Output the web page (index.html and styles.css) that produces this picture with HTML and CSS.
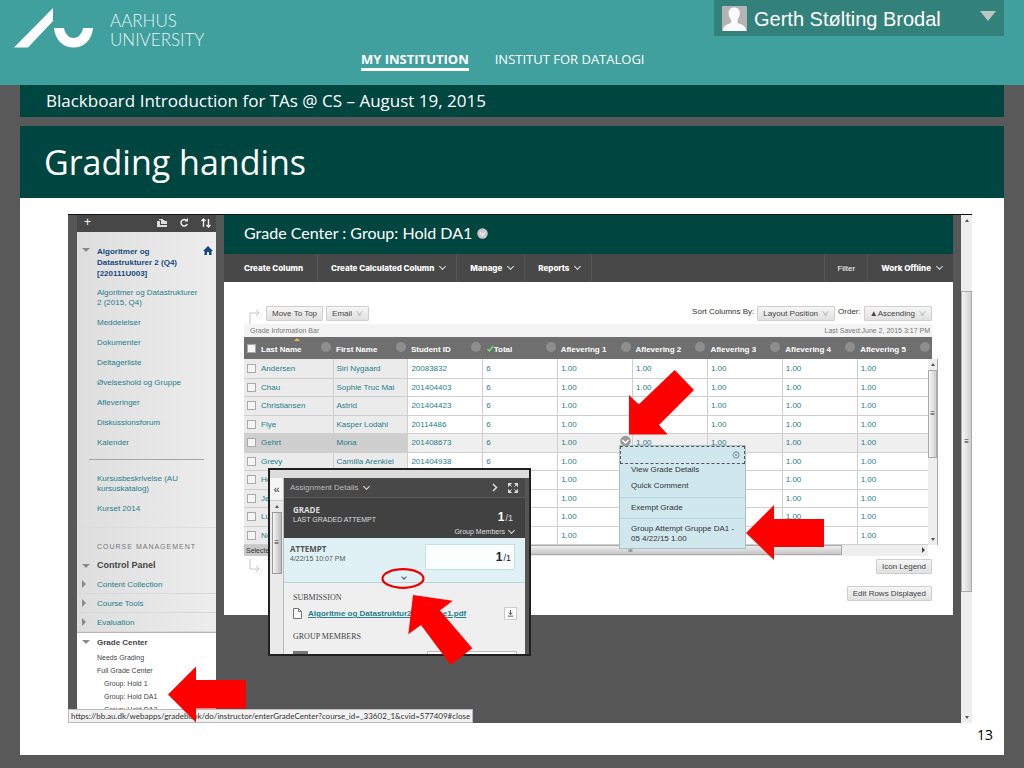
FILE: index.html
```
<!DOCTYPE html>
<html lang="en">
<head>
<meta charset="utf-8">
<title>Grading handins</title>
<link rel="stylesheet" href="styles.css">
</head>
<body>
<header class="top">
  <div class="brand">
    <svg class="logo" viewBox="0 0 80 40" aria-hidden="true"><path d="M0 39.500 39 0V13L14 39.500ZM40 20H50C51 26 55 30 59.500 30S68 26 69 20H79C78 32 70 39.500 59.500 39.500S41 32 40 20Z" fill="#fff"/></svg>
    <span class="brand-name">AARHUS<br>UNIVERSITY</span>
  </div>
  <nav class="tabs">
    <a class="tab tab-on" href="#">MY INSTITUTION</a>
    <a class="tab" href="#">INSTITUT FOR DATALOGI</a>
  </nav>
  <button class="user" type="button">
    <svg class="avatar" viewBox="0 0 25 25" aria-hidden="true"><rect width="25" height="25" rx="1" fill="#b4b4b4"/><path d="M12.200 1.500C16 1.500 18.200 4 17.800 8Q17.500 11.500 15.500 14V17Q24 19 24.500 25H.5Q1 19 9 17V14Q7 11.500 6.600 8C6.200 4 8.400 1.500 12.200 1.500Z" fill="#fafafa"/></svg>
    <span class="user-name">Gerth Stølting Brodal</span>
    <svg class="caret" viewBox="0 0 16 10" aria-hidden="true"><path d="M0 0H16L8 10Z" fill="#bcc6c5"/></svg>
  </button>
</header>
<div class="page">
  <div class="course">Blackboard Introduction for TAs @ CS – August 19, 2015</div>
  <h1 class="heading">Grading handins</h1>
  <main class="slide">
    <div class="shot">
      <aside class="side">
        <div class="side-tools">
          <span class="plus">+</span>
          <svg class="tool" viewBox="0 0 14 14"><path d="M2 5H5V9H12V11H2ZM6 4H9L10 5H12V8H6ZM4 3H8V4H4Z" fill="#ddd"/></svg>
          <svg class="tool" viewBox="0 0 14 14"><path d="M9.500 4.500A3.200 3.200 0 1 0 10.200 8" fill="none" stroke="#eee" stroke-width="1.500"/><path d="M7.500 5.500H11V2Z" fill="#eee"/></svg>
          <svg class="tool" viewBox="0 0 14 14"><path d="M4.500 11V3M2.500 5 4.500 3 6.500 5M9.500 3V11M7.500 9 9.500 11 11.500 9" fill="none" stroke="#eee" stroke-width="1.400"/></svg>
        </div>
        <div class="side-main">
          <div class="side-title"><i class="tri-down"></i><a class="title-link" href="#">Algoritmer og<br>Datastrukturer 2 (Q4)<br>[220111U003]</a>
            <svg class="home" viewBox="0 0 10 9"><path d="M0 5 5 0 10 5H8.500V9H6V6H4V9H1.500V5Z" fill="#14457c"/></svg></div>
          <nav class="links">
            <a href="#">Algoritmer og Datastrukturer<br>2 (2015, Q4)</a>
            <a href="#">Meddelelser</a>
            <a href="#">Dokumenter</a>
            <a href="#">Deltagerliste</a>
            <a href="#">Øvelseshold og Gruppe</a>
            <a href="#">Afleveringer</a>
            <a href="#">Diskussionsforum</a>
            <a href="#">Kalender</a>
          </nav>
          <hr class="rule">
          <nav class="links">
            <a href="#">Kursusbeskrivelse (AU<br>kursuskatalog)</a>
            <a href="#">Kurset 2014</a>
          </nav>
          <div class="mgmt">COURSE MANAGEMENT</div>
          <div class="fold strong"><i class="tri-down"></i>Control Panel</div>
          <a class="fold" href="#"><i class="tri-right"></i>Content Collection</a>
          <a class="fold" href="#"><i class="tri-right"></i>Course Tools</a>
          <a class="fold" href="#"><i class="tri-right"></i>Evaluation</a>
        </div>
        <div class="side-grade">
          <div class="fold dark"><i class="tri-down"></i>Grade Center</div>
          <a class="sub" href="#">Needs Grading</a>
          <a class="sub" href="#">Full Grade Center</a>
          <a class="sub deep" href="#">Group: Hold 1</a>
          <a class="sub deep" href="#">Group: Hold DA1</a>
          <a class="sub deep" href="#">Group: Hold DA2</a>
        </div>
      </aside>

      <section class="center">
        <h2 class="gc-title">Grade Center : Group: Hold DA1 <svg class="badge" viewBox="0 0 11 11"><circle cx="5.500" cy="5.500" r="5.200" fill="#c9c9c9"/><path d="M3 4.500 5.500 7 8 4.500" fill="none" stroke="#eee" stroke-width="1.300"/></svg></h2>
        <div class="menu">
          <button class="mi" type="button">Create Column</button>
          <button class="mi" type="button">Create Calculated Column<i class="chev"></i></button>
          <button class="mi" type="button">Manage<i class="chev"></i></button>
          <button class="mi" type="button">Reports<i class="chev"></i></button>
          <span class="grow"></span>
          <button class="mi plain" type="button">Filter</button>
          <button class="mi last" type="button">Work Offline<i class="chev"></i></button>
        </div>
        <div class="work">
          <div class="bar">
            <svg class="elbow" viewBox="0 0 14 17"><path d="M1 17V6H10M7 3 10 6 7 9" fill="none" stroke="#c4c4c4"/></svg>
            <button class="btn" type="button">Move To Top</button>
            <button class="btn" type="button">Email<i class="dbl"></i></button>
            <span class="grow"></span>
            <span class="lab">Sort Columns By:</span>
            <button class="btn" type="button">Layout Position<i class="dbl"></i></button>
            <span class="lab">Order:</span>
            <button class="btn" type="button">▲Ascending<i class="dbl"></i></button>
          </div>
          <div class="info"><span>Grade Information Bar</span><span>Last Saved:June 2, 2015 3:17 PM</span></div>
          <div class="grid">
            <table class="grades">
              <colgroup><col class="c-check"><col class="c-last"><col><col><col><col><col><col><col><col></colgroup>
              <thead><tr>
                <th><input type="checkbox" aria-label="Select all"></th>
                <th class="sorted"><div class="th">Last Name<i class="dot"></i></div></th>
                <th><div class="th">First Name<i class="dot"></i></div></th>
                <th><div class="th">Student ID<i class="dot"></i></div></th>
                <th><div class="th"><span><svg class="tick" viewBox="0 0 7 7"><path d="M1 4 3 6 6.500 1" fill="none" stroke="#7be06a" stroke-width="1.400"/></svg>Total</span><i class="dot"></i></div></th>
                <th><div class="th">Aflevering 1<i class="dot"></i></div></th>
                <th><div class="th">Aflevering 2<i class="dot"></i></div></th>
                <th><div class="th">Aflevering 3<i class="dot"></i></div></th>
                <th><div class="th">Aflevering 4<i class="dot"></i></div></th>
                <th><div class="th">Aflevering 5<i class="dot"></i></div></th>
              </tr></thead>
              <tbody>
                <tr><td><input type="checkbox" aria-label="Andersen"></td><td>Andersen</td><td>Siri Nygaard</td><td>20083832</td><td>6</td><td>1.00</td><td>1.00</td><td>1.00</td><td>1.00</td><td>1.00</td></tr>
                <tr><td><input type="checkbox" aria-label="Chau"></td><td>Chau</td><td>Sophie Truc Mai</td><td>201404403</td><td>6</td><td>1.00</td><td>1.00</td><td>1.00</td><td>1.00</td><td>1.00</td></tr>
                <tr><td><input type="checkbox" aria-label="Christiansen"></td><td>Christiansen</td><td>Astrid</td><td>201404423</td><td>6</td><td>1.00</td><td>1.00</td><td>1.00</td><td>1.00</td><td>1.00</td></tr>
                <tr><td><input type="checkbox" aria-label="Flye"></td><td>Flye</td><td>Kasper Lodahl</td><td>20114486</td><td>6</td><td>1.00</td><td></td><td>1.00</td><td>1.00</td><td>1.00</td></tr>
                <tr class="hover"><td><input type="checkbox" aria-label="Gehrt"></td><td>Gehrt</td><td>Mona</td><td>201408673</td><td>6</td><td>1.00</td><td>1.00</td><td>1.00</td><td>1.00</td><td>1.00</td></tr>
                <tr><td><input type="checkbox" aria-label="Grevy"></td><td>Grevy</td><td>Camilla Arenkiel</td><td>201404938</td><td>6</td><td>1.00</td><td></td><td></td><td>1.00</td><td>1.00</td></tr>
                <tr><td><input type="checkbox" aria-label="He"></td><td>He</td><td></td><td></td><td></td><td>1.00</td><td></td><td></td><td>1.00</td><td>1.00</td></tr>
                <tr><td><input type="checkbox" aria-label="Je"></td><td>Je</td><td></td><td></td><td></td><td>1.00</td><td></td><td></td><td>1.00</td><td>1.00</td></tr>
                <tr><td><input type="checkbox" aria-label="Lu"></td><td>Lu</td><td></td><td></td><td></td><td>1.00</td><td></td><td></td><td>1.00</td><td>1.00</td></tr>
                <tr><td><input type="checkbox" aria-label="No"></td><td>No</td><td></td><td></td><td></td><td>1.00</td><td></td><td></td><td></td><td>1.00</td></tr>
              </tbody>
            </table>
            <div class="vscroll"><i class="up"></i><i class="vthumb">≡</i><i class="down"></i></div>
          </div>
          <div class="hscroll"><span class="sel">Selected</span><span class="hthumb">III</span><i class="right"></i></div>
          <div class="under">
            <svg class="elbow" viewBox="0 0 14 17"><path d="M1 0V10H10M7 7 10 10 7 13" fill="none" stroke="#c4c4c4"/></svg>
            <button class="btn" type="button">Icon Legend</button>
          </div>
          <div class="under2"><button class="btn" type="button">Edit Rows Displayed</button></div>
        </div>
      </section>

      <div class="wscroll"><i class="up"></i><i class="wthumb">≡</i><i class="down"></i></div>

      <div class="context">
        <div class="ctx-head"><svg class="close" viewBox="0 0 8 8"><circle cx="4" cy="4" r="3" fill="none" stroke="#8fa3aa" stroke-width="1.300"/><path d="M2.800 2.800 5.200 5.200M5.200 2.800 2.800 5.200" stroke="#8fa3aa"/></svg></div>
        <a href="#">View Grade Details</a>
        <a href="#">Quick Comment</a>
        <a class="split" href="#">Exempt Grade</a>
        <a class="split" href="#">Group Attempt Gruppe DA1 -<br>05 4/22/15 1.00</a>
      </div>

      <section class="attempt">
        <div class="rail"><span class="coll">«</span><i class="up"></i><i class="rthumb">≡</i></div>
        <div class="att-body">
          <div class="att-top"><span>Assignment Details</span><i class="chev"></i><span class="grow"></span>
            <svg class="next" viewBox="0 0 6 9"><path d="M1 1 4.500 4.500 1 8" fill="none" stroke="#ddd" stroke-width="1.500"/></svg>
            <svg class="expand" viewBox="0 0 11 11"><path d="M0 0H4L0 4ZM11 0V4L7 0ZM0 11V7L4 11ZM11 11H7L11 7ZM1 1 4 4M10 1 7 4M1 10 4 7M10 10 7 7" fill="#ddd" stroke="#ddd"/></svg></div>
          <div class="att-grade">
            <div><div class="big">GRADE</div><div>LAST GRADED ATTEMPT</div></div>
            <div class="score-col"><div class="score"><b>1</b>/1</div><div class="members">Group Members<i class="chev"></i></div></div>
          </div>
          <div class="att-try">
            <div><div class="big">ATTEMPT</div><div>4/22/15 10:07 PM</div></div>
            <div class="score box"><b>1</b>/1</div>
            <i class="chev opener"></i>
          </div>
          <div class="att-sub">
            <div class="serif">SUBMISSION</div>
            <div class="file">
              <svg class="doc" viewBox="0 0 9 11"><path d="M.5 .5H5.500L8.500 3.500V10.500H.5ZM5.500 .5V3.500H8.500" fill="#fff" stroke="#777"/></svg>
              <a href="#">Algoritme og Datastruktur2 - Gruppe1.pdf</a>
              <button class="dl" type="button" aria-label="Download"><svg viewBox="0 0 8 8"><path d="M4 0V5M2 3 4 5.200 6 3M1 7H7" fill="none" stroke="#444"/></svg></button>
            </div>
            <div class="serif">GROUP MEMBERS</div>
            <div class="cut"><i></i><i></i></div>
          </div>
        </div>
      </section>

      <div class="status">https://bb.au.dk/webapps/gradebook/do/instructor/enterGradeCenter?course_id=_33602_1&amp;cvid=577409#close</div>

      <svg class="marks" viewBox="68 214 904 509" aria-hidden="true">
        <circle cx="625.500" cy="441" r="5.300" fill="#9a9a9a"/><path d="M622.500 440 625.500 443 628.500 440" fill="none" stroke="#fff" stroke-width="1.400"/>
        <g fill="#f00">
          <path d="M674.700 370 694 390 659 425 667.700 434.600H629V395L638.700 404.600Z"/>
          <path d="M746 533 774 505V519H824V547H774V560Z"/>
          <path d="M413 595 452.700 600.700 440 610.500 472.300 648.300 450.700 665 421 625 408.300 634.300Z"/>
          <path d="M168 694.500 196 666.500V680H246V708.500H196V722.500Z"/>
        </g>
        <ellipse cx="403" cy="578.500" rx="20.500" ry="9.300" fill="none" stroke="#e00" stroke-width="2.200"/>
      </svg>
    </div>
    <footer class="num">13</footer>
  </main>
</div>
</body>
</html>
```
FILE: styles.css
```
* { box-sizing: border-box; }
body { margin: 0; background: #595959; font-family: "Liberation Sans", Arial, sans-serif; font-size: 8px; line-height: 11px; color: #333; }
a { text-decoration: none; color: #24808c; }
button { font: inherit; border: 0; margin: 0; cursor: pointer; }
i { font-style: normal; }
svg { display: block; flex: none; }
.grow { flex: 1; }

.top { display: flex; align-items: flex-start; min-height: 85px; padding-right: 20px; background: #3fa09e; }
.brand { display: flex; width: 361px; padding: 8px 0 0 14px; color: #e6f3f3; }
.logo { width: 80px; height: 40px; }
.brand-name { padding: 3px 0 0 16px; font: 300 17px/19px Lato, sans-serif; }
.tabs { display: flex; gap: 26px; padding-top: 50px; font: 13px/18px "Open Sans", sans-serif; }
.tab { color: #fff; white-space: nowrap; }
.tab-on { font-weight: 700; border-bottom: 3px solid #fff; }
.user { display: flex; width: 290px; height: 36px; margin-left: auto; padding: 6px 8px 0 8px; background: #33817b; color: #fff; font-size: 20px; line-height: 26px; }
.avatar { width: 25px; height: 25px; }
.user-name { margin-left: 7px; white-space: nowrap; }
.caret { width: 16px; height: 10px; margin: 5px 0 0 auto; }

.page { margin: 0 20px 13px; }
.course { padding: 4px 26px 4px; background: #004640; color: #fff; font: 17px/24px "Open Sans", sans-serif; }
.heading { margin: 9px 0 0; padding: 12px 24px 12px; background: #004640; color: #fff; font: 400 34px/48px "Open Sans", sans-serif; }
.slide { padding: 16px 0 0; background: #fff; }
.shot { position: relative; display: grid; grid-template-columns: 139px 1fr 11px; column-gap: 8px; min-height: calc(100vh - 259px); margin: 0 32px 0 48px; padding-left: 9px; border-top: 1px solid #111; background: #575757; overflow: hidden; }
.num { padding: 0 11px 8px 0; text-align: right; color: #000; font: 14px/24px "Open Sans", sans-serif; }

.side { display: flex; flex-direction: column; }
.side-tools { display: flex; align-items: center; height: 17px; padding: 0 3px 2px 7px; gap: 8px; background: #474747; color: #fff; }
.plus { flex: 1; font-size: 12px; }
.tool { width: 14px; height: 14px; }
.side-main { padding-top: 14px; background: linear-gradient(90deg, #dedede, #ededed); }
.side-title { display: flex; padding: 0 3px 9px 5px; line-height: 11px; }
.title-link { flex: 1; color: #174a80; font-weight: 700; }
.home { width: 10px; height: 9px; }
.tri-down { flex: none; width: 8px; height: 0; margin: 2px 7px 0 0; border: solid transparent; border-width: 4px 4px 0; border-top-color: #8a8a8a; }
.tri-right { flex: none; width: 4px; height: 0; margin: 0 11px 0 0; border: solid transparent; border-width: 4px 0 4px 4px; border-left-color: #8a8a8a; }
.links { display: flex; flex-direction: column; gap: 9px; padding-left: 20px; }
.links a:first-child { line-height: 10px; }
.rule { margin: 11px 12px 14px; border: 0; border-top: 1px solid #a5a5a5; }
.mgmt { margin-top: 13px; padding: 13px 0 4px 20px; border-top: 1px solid #ddd; color: #777; font-size: 7px; letter-spacing: 1px; white-space: nowrap; }
.fold { display: flex; align-items: center; height: 19px; padding-left: 5px; border-bottom: 1px solid #d9d9d9; }
.fold .tri-down { margin-top: 0; }
.strong, .dark { font-weight: 700; border: 0; color: #444; }
.strong { font-size: 9px; }
.dark { height: 18px; }
.side-grade { flex: 1; background: #fff; border-top: 1px solid #b5b5b5; }
.sub { display: block; padding-left: 20px; font-size: 7px; line-height: 13px; color: #444; }
.deep { padding-left: 27px; }

.center { min-width: 0; }
.gc-title { display: flex; align-items: center; gap: 5px; margin: 0; height: 39px; padding: 0 0 3px 20px; background: #004640; color: #fff; font: 400 16px/36px Lato, sans-serif; }
.badge { width: 11px; height: 11px; }
.menu { display: flex; height: 28px; background: #484848; }
.mi { display: flex; align-items: center; padding: 0 10px 0 13px; border-right: 1px solid #555; background: none; color: #fff; font: 800 8px/11px Inter, sans-serif; white-space: nowrap; }
.mi:first-child { padding: 0 14px 0 20px; }
.plain { padding: 0 12px; border-left: 1px solid #555; font: 8px/11px "Liberation Sans", sans-serif; }
.last { border: 0; }
.chev { flex: none; width: 5px; height: 5px; margin: 0 1px 3px 6px; border: solid #ddd; border-width: 0 1px 1px 0; transform: rotate(45deg); }
.work { padding: 24px 21px 14px 20px; background: #fff; }
.bar { display: flex; gap: 3px; height: 18px; white-space: nowrap; }
.elbow { width: 14px; height: 17px; margin: 1px 0 0 5px; }
.lab { line-height: 12px; }
.btn { display: inline-flex; align-items: center; height: 15px; padding: 0 5px; border: 1px solid #cfcfcf; border-radius: 1px; background: linear-gradient(#f6f6f6, #e0e0e0); color: #444; white-space: nowrap; }
.dbl { width: 5px; height: 5px; margin: -5px 1px 0 5px; border: solid #c4c4c4; border-width: 0 1px 1px 0; box-shadow: 2px 2px 0 -1px #c4c4c4; transform: rotate(45deg); }
.info { display: flex; justify-content: space-between; padding: 1px 2px 1px 6px; background: #f3f3f3; color: #777; font-size: 7px; }
.grid { position: relative; }
.grades { width: 100%; table-layout: fixed; border-collapse: collapse; }
.c-check { width: 14px; }
.c-last { width: 75px; }
.grades th { height: 22px; padding: 0; background: #6f6f6f; color: #fff; text-align: left; }
.sorted { position: relative; }
.sorted::before { content: ""; position: absolute; top: 1px; left: 36px; border: solid transparent; border-width: 0 3px 3px; border-bottom-color: #f0b93c; }
.th { display: flex; justify-content: space-between; padding: 3px 2px 0 3px; white-space: nowrap; }
.tick { display: inline-block; width: 8px; height: 7px; }
.dot { width: 10px; height: 10px; margin-top: -2px; border-radius: 5px; background: #8e8e8e; }
.grades td { height: 19px; padding: 0 3px; border-bottom: 1px solid #cfcfcf; color: #24808c; white-space: nowrap; }
.grades tr:nth-child(even) td { height: 18px; }
.grades td:nth-child(-n+3) { background: #ebebeb; }
.grades td:nth-child(n+3) { border-left: 1px solid #cfcfcf; }
.grades .hover td { background: #efefef; }
.grades .hover td:nth-child(-n+3) { background: #cfcfcf; }
.grades input { appearance: none; display: block; width: 9px; height: 9px; margin: 0 0 0 3px; border: 1px solid #aaa; background: #f5f5f5; }
.grades td:first-child { padding: 0; }
.vscroll { position: absolute; top: 22px; right: -6px; bottom: 0; width: 10px; display: flex; flex-direction: column; align-items: center; background: #eee; border-right: 1px solid #aaa; }
.up, .down { border: solid transparent; border-width: 0 2px 3px; border-bottom-color: #555; margin: 4px 0; }
.down { border-width: 3px 2px 0; border-top-color: #555; margin-top: auto; }
.vthumb { width: 9px; height: 88px; border: 1px solid #aaa; background: linear-gradient(90deg, #f6f6f6, #d0d0d0); line-height: 86px; text-align: center; }
.hscroll { display: flex; align-items: center; height: 11px; margin-right: 4px; background: #eee; }
.sel { padding: 0 2px; background: #c8c8c8; font-size: 7px; }
.hthumb { width: 567px; height: 10px; border: 1px solid #aaa; background: linear-gradient(#eee, #c6c6c6); font-size: 5px; line-height: 8px; padding-left: 352px; }
.right { margin: 0 3px 0 auto; border: solid transparent; border-width: 3px 0 3px 3px; border-left-color: #444; }
.under { display: flex; justify-content: space-between; padding-top: 3px; }
.under .elbow { margin-top: 0; }
.under2 { padding-top: 10px; text-align: right; }
.wscroll { display: flex; flex-direction: column; align-items: center; background: #eee; }
.wthumb { width: 11px; height: 301px; margin-top: 65px; border: 1px solid #aaa; background: linear-gradient(90deg, #f6f6f6, #cfcfcf); line-height: 299px; text-align: center; }

.context { position: absolute; left: 551px; top: 230px; width: 127px; padding-bottom: 4px; border: 1px solid #a8c0c6; background: #d0e8ed; }
.context a { display: block; margin: 0 0 6px; padding: 0 11px; line-height: 10px; color: #333; white-space: nowrap; }
.ctx-head { display: flex; justify-content: flex-end; align-items: center; height: 18px; margin-bottom: 1px; padding-right: 4px; border: 1px dashed #555; }
.close { width: 8px; height: 8px; }
.context .split { padding-top: 5px; border-top: 1px solid #b8d3da; margin-bottom: 5px; }
.context .split:last-child { margin: 0; }

.attempt { position: absolute; left: 200px; top: 253px; display: flex; width: 263px; height: 188px; padding-top: 8px; border: 2px solid #202020; background: #dcdcdc; overflow: hidden; }
.rail { display: flex; flex-direction: column; align-items: center; width: 14px; background: #eaeaea; border-right: 1px solid #bbb; }
.coll { width: 100%; height: 23px; border-bottom: 1px solid #ccc; background: #f5f5f5; text-align: center; font-size: 11px; line-height: 22px; }
.rthumb { width: 10px; height: 62px; border: 1px solid #999; background: linear-gradient(90deg, #f6f6f6, #bbb); line-height: 60px; text-align: center; }
.att-body { flex: 1; border-right: 4px solid #555; background: #efefef; color: #555; font-size: 7px; line-height: 9px; }
.att-top { display: flex; align-items: center; height: 20px; padding: 0 7px 0 6px; background: #484848; border-bottom: 1px solid #5a5a5a; color: #bbb; font-size: 8px; }
.next { width: 6px; height: 9px; margin-right: 10px; }
.expand { width: 10px; height: 10px; }
.att-grade { display: flex; justify-content: space-between; height: 40px; padding: 7px 12px 0 9px; background: #414141; color: #ddd; }
.big { font: 700 8px/10px "Open Sans", sans-serif; }
.score { text-align: right; font-size: 9px; line-height: 12px; }
.score b { font-size: 12px; margin-right: 1px; }
.score-col { padding-top: 6px; }
.score-col b { color: #fff; }
.members { display: flex; align-items: center; margin: 3px -2px 0 0; }
.members .chev { margin-left: 4px; }
.att-try { position: relative; display: flex; justify-content: space-between; height: 45px; padding: 6px 10px 0 6px; border-bottom: 1px solid #b5d8e0; background: #dff1f4; }
.box { width: 90px; height: 26px; padding: 6px 3px 0; border: 1px solid #c3e1e8; background: #fafefe; color: #222; }
.opener { position: absolute; left: 112px; bottom: 0; width: 4px; height: 4px; border-color: #555; }
.att-sub { padding: 10px 8px 0 9px; }
.serif { font: 8px/10px "Liberation Serif", serif; color: #444; }
.file { display: flex; align-items: center; gap: 6px; height: 21px; margin-bottom: 8px; font-size: 8px; font-weight: 700; white-space: nowrap; }
.file a { text-decoration: underline; }
.doc { width: 9px; height: 11px; }
.dl { width: 13px; height: 13px; margin-left: auto; padding: 2px; border: 1px solid #ccc; background: #fff; }
.dl svg { width: 7px; height: 7px; }
.cut { display: flex; justify-content: space-between; padding-top: 9px; }
.cut i { width: 15px; height: 4px; background: #777; }
.cut i:last-child { width: 90px; border: 1px solid #bbb; background: #fff; }

.status { position: absolute; left: 0; bottom: 0; padding: 0 2px; border: 1px solid #bbb; background: #f2f2f2; color: #333; font: 8px/12px Lato, sans-serif; white-space: nowrap; }
.marks { position: absolute; left: 0; top: -1px; width: 904px; height: 509px; pointer-events: none; }
```
